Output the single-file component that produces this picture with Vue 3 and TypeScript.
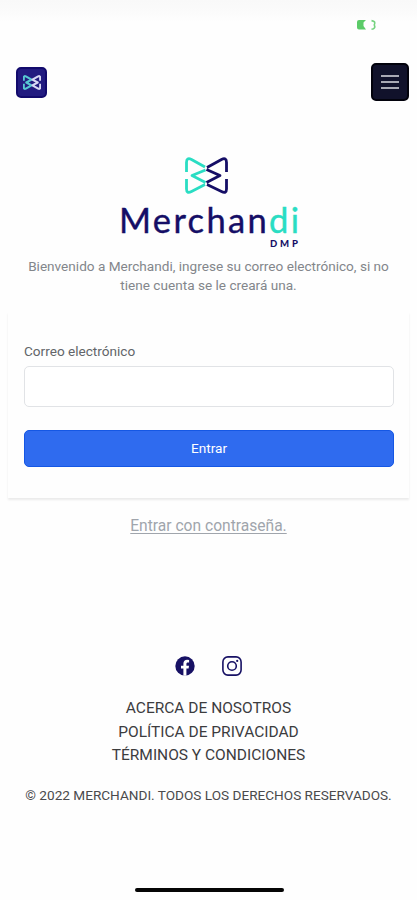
<script setup lang="ts">
import { ref } from 'vue'

const email = ref<string>('')
const links: string[] = ['ACERCA DE NOSOTROS', 'POLÍTICA DE PRIVACIDAD', 'TÉRMINOS Y CONDICIONES']
</script>

<template>
  <div class="screen">
    <div class="status">
      <svg class="battery" width="22" height="12" viewBox="0 0 22 12">
        <path d="M3 1h7L7.500 3.500V7L10 10.500H3a2 2 0 0 1-2-2V3a2 2 0 0 1 2-2z" fill="#5bcb68" />
        <path d="M15.500 1.600c3.400.6 3.900 1.600 2.800 4.300 1.100 2.500.3 4-2.800 4.400" fill="none" stroke="#74d27e" stroke-width="1.600" />
      </svg>
    </div>

    <header class="nav">
      <span class="tile">
        <svg width="18" height="15" viewBox="0 0 44 36" fill="none" stroke-width="5" stroke-linejoin="round">
          <path d="M2 14V6Q2 1 7 3L21 11 8 18 21 25 7 33Q2 35 2 30V21" stroke="#58c8d2" />
          <path d="M42 14V6Q42 1 37 3L23 11 36 18 23 25 37 33Q42 35 42 30V21" stroke="#d8d8f4" />
        </svg>
      </span>
      <button class="menu" aria-label="Menú">
        <i></i><i></i><i></i>
      </button>
    </header>

    <main>
      <svg class="brand" width="180" height="94" viewBox="0 0 180 94">
        <g fill="none" stroke-width="2.800" stroke-linejoin="round">
          <path d="M67.500 17V7.500Q67.500 2 72.500 4.500L86 12M86.500 15L73 20.500 86.500 27.500M86 29.500L72.500 36.500Q67.500 39 67.500 34V24" stroke="#2addc3" />
          <path d="M107.500 17V7.500Q107.500 2 102.500 4.500L88 12.500M87.500 14.500L101 20.500 87.500 27.500M88 29.500L102.500 36.500Q107.500 39 107.500 34V24" stroke="#150e66" />
        </g>
        <text class="word" x="0" y="78" textLength="180" lengthAdjust="spacing">Merchan<tspan class="teal">di</tspan></text>
        <text class="dmp" x="151" y="91.500" textLength="28" lengthAdjust="spacing">DMP</text>
      </svg>

      <p class="intro">Bienvenido a Merchandi, ingrese su correo electrónico, si no<br />tiene cuenta se le creará una.</p>

      <form class="card" @submit.prevent>
        <label for="email">Correo electrónico</label>
        <input id="email" v-model="email" type="email" />
        <button class="submit" type="submit">Entrar</button>
      </form>

      <a class="alt">Entrar con contraseña.</a>
    </main>

    <footer>
      <div class="social">
        <svg width="20" height="20" viewBox="0 0 20 20">
          <circle cx="10" cy="10" r="9.700" fill="#171164" />
          <path d="M8.400 19.700V12.500H6V9.700h2.400V7.600c0-2.500 1.500-3.800 3.700-3.800l2 .2v2.400h-1.200c-1.200 0-1.500.7-1.500 1.500v1.800h2.600l-.4 2.800h-2.200v7.200z" fill="#fff" />
        </svg>
        <svg width="20" height="20" viewBox="0 0 20 20" fill="none" stroke="#171164" stroke-width="1.600">
          <rect x="0.900" y="0.900" width="18.200" height="18.200" rx="5" />
          <circle cx="10" cy="10" r="4.300" />
          <circle cx="15.200" cy="4.900" r="1.100" fill="#171164" stroke="none" />
        </svg>
      </div>
      <nav class="links">
        <a v-for="link in links" :key="link">{{ link }}</a>
      </nav>
      <p class="copy">© 2022 MERCHANDI. TODOS LOS DERECHOS RESERVADOS.</p>
    </footer>

    <div class="home"></div>
  </div>
</template>

<style>
body {
  background: #fefefe;
}
</style>

<style scoped>
.screen {
  box-sizing: border-box;
  height: 900px;
  display: flex;
  flex-direction: column;
  overflow: hidden;
  background: #fefefe;
  font-family: Roboto, "Liberation Sans", sans-serif;
}
.status {
  box-sizing: border-box;
  height: 63px;
  padding: 19px 39px 0 0;
  display: flex;
  justify-content: flex-end;
  background: linear-gradient(#f9f9f9, #fbfbfb 12px, #fefefe 22px);
}
.nav {
  height: 38px;
  padding: 0 8px 0 16px;
  display: flex;
  align-items: center;
  justify-content: space-between;
}
.tile {
  box-sizing: border-box;
  width: 31px;
  height: 31px;
  display: flex;
  align-items: center;
  justify-content: center;
  border: 2px solid #120a6c;
  border-radius: 5px;
  background: #221b80;
}
.menu {
  box-sizing: border-box;
  width: 38px;
  height: 38px;
  padding: 0;
  display: flex;
  flex-direction: column;
  align-items: center;
  justify-content: center;
  gap: 4px;
  border: 2px solid #02020c;
  border-radius: 5px;
  background: #11122b;
}
.menu i {
  width: 18px;
  height: 2px;
  background: #a9aab4;
}
main {
  display: flex;
  flex-direction: column;
  align-items: center;
}
.brand {
  margin-top: 54px;
}
.word {
  font: 400 34.5px Lato, sans-serif;
  fill: #150e66;
  stroke: #150e66;
  stroke-width: 0.4px;
}
.teal {
  fill: #2addc3;
  stroke: #2addc3;
}
.dmp {
  font: 900 9.5px Lato, sans-serif;
  fill: #150e66;
}
.intro {
  margin: 8px 0 0;
  font-size: 13.6px;
  line-height: 19px;
  text-align: center;
  white-space: nowrap;
  color: #83868b;
}
.card {
  box-sizing: border-box;
  width: 401px;
  height: 186px;
  margin-top: 17px;
  padding: 29px 15px 0 16px;
  display: flex;
  flex-direction: column;
  background: #fefefe;
  box-shadow: 0 2px 2px rgba(0, 0, 0, 0.08);
}
label {
  font-size: 13.6px;
  line-height: 20px;
  color: #626569;
}
input {
  box-sizing: border-box;
  width: 100%;
  height: 41px;
  margin: 5px 0 0;
  border: 1.5px solid #e1e3e6;
  border-radius: 5px;
  background: #fff;
}
.submit {
  box-sizing: border-box;
  height: 37px;
  margin-top: 23px;
  padding: 0 0 1px;
  border: 1px solid #1557e4;
  border-radius: 5px;
  background: #2f6bef;
  color: #fff;
  font: 400 13.6px Roboto, sans-serif;
}
.alt {
  margin-top: 17px;
  font-size: 15.6px;
  line-height: 22px;
  color: #a0a5ac;
  text-decoration: underline;
  text-underline-offset: 2px;
}
footer {
  margin-top: 119px;
  display: flex;
  flex-direction: column;
  align-items: center;
}
.social {
  display: flex;
  gap: 27px;
}
.links {
  margin-top: 21px;
  display: flex;
  flex-direction: column;
  align-items: center;
  font-size: 15.5px;
  line-height: 23.5px;
  color: #3c3c3e;
}
.copy {
  margin: 17px 0 0;
  font-size: 13.6px;
  line-height: 20px;
  white-space: nowrap;
  color: #4a4a4c;
}
.home {
  width: 149px;
  height: 4px;
  margin: auto auto 8px 134.5px;
  border-radius: 2px;
  background: #050505;
}
</style>
